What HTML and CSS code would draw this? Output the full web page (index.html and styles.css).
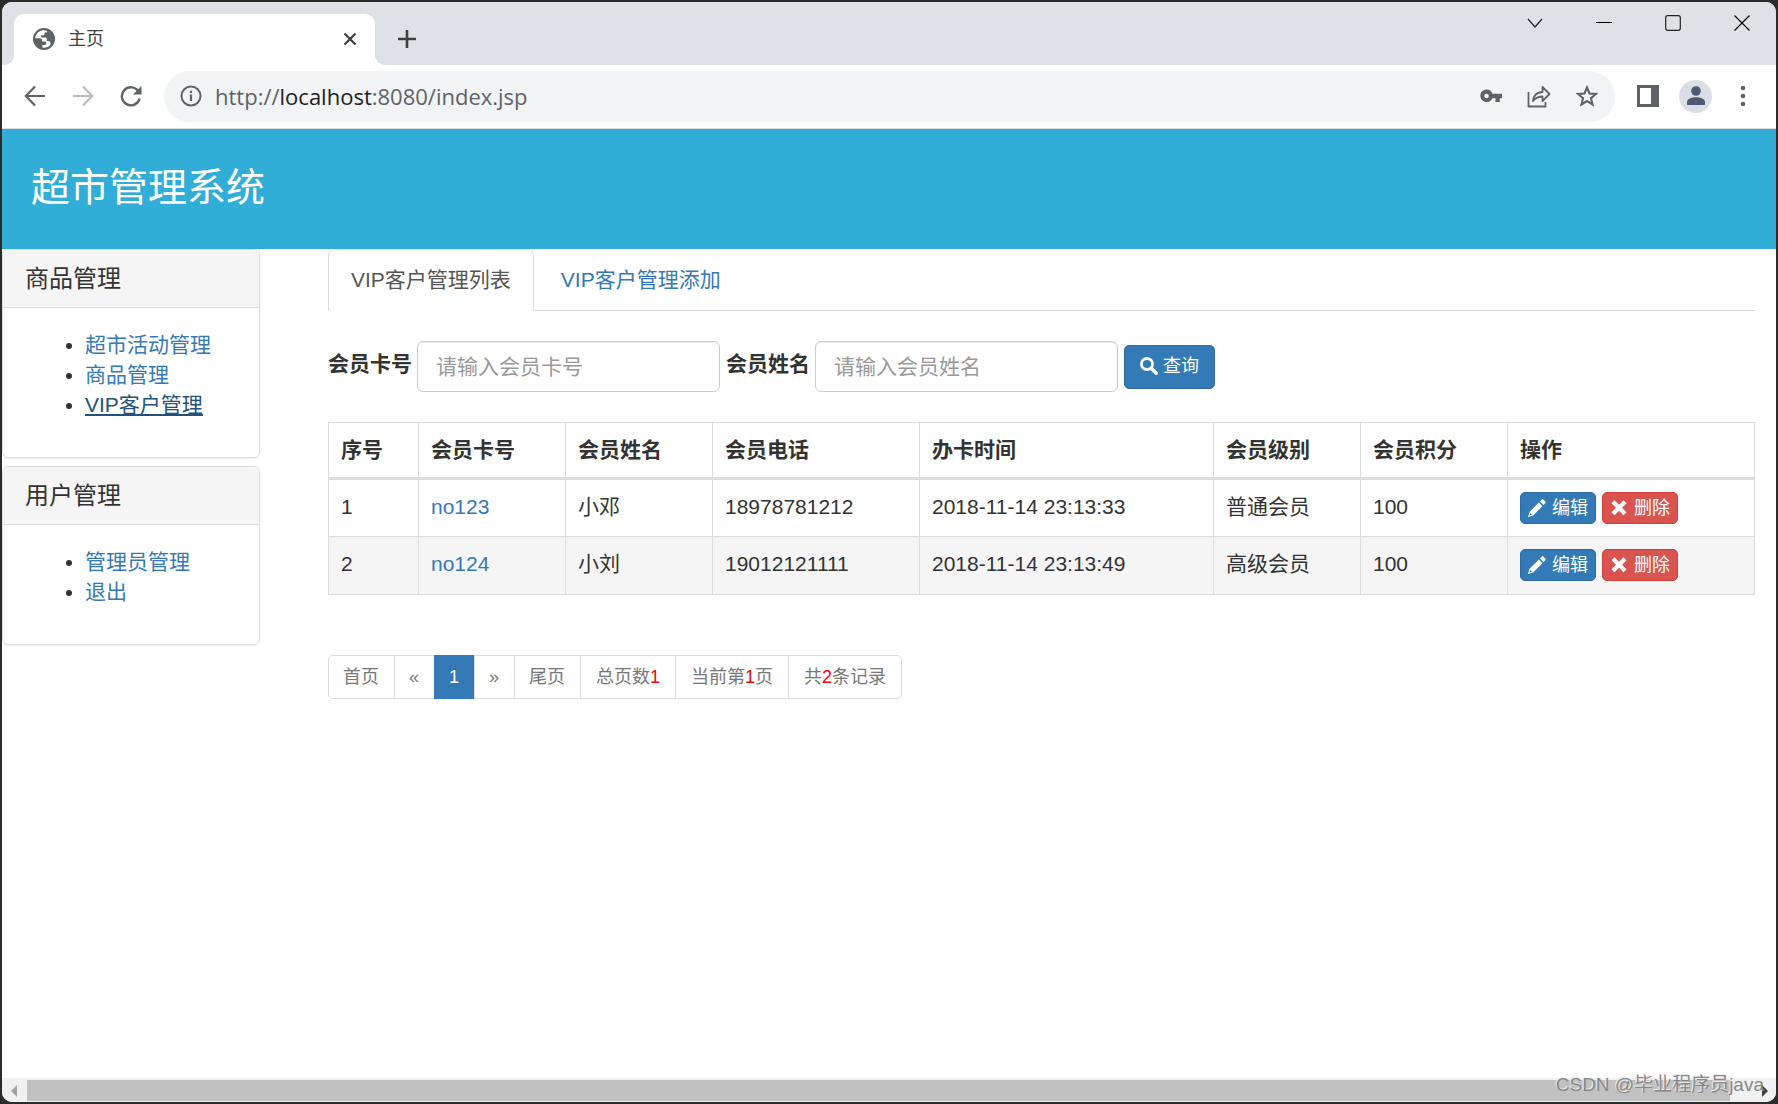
FILE: index.html
```html
<!DOCTYPE html>
<html lang="zh-CN">
<head>
<meta charset="utf-8">
<title>主页</title>
<link rel="stylesheet" href="styles.css">
</head>
<body>
<svg width="0" height="0" class="symbols" aria-hidden="true">
  <symbol id="pencil" viewBox="0 0 18 18"><path fill="currentColor" d="M0 18l1.600-5.200L10.800 3.600l3.600 3.600L5.200 16.400zM2.300 14l-.8 2.500 2.500-.8zM11.900 2.500L13.700.7c.5-.5 1.200-.5 1.700 0l1.900 1.900c.5.500.5 1.200 0 1.700l-1.800 1.800z" fill-rule="evenodd"/></symbol>
  <symbol id="remove" viewBox="0 0 18 18"><path fill="currentColor" d="M4.500 1.200L9 5.700l4.500-4.500 3 3L12 8.700l4.500 4.500-3 3L9 11.700l-4.500 4.500-3-3L6 8.700 1.500 4.200z"/></symbol>
  <symbol id="search" viewBox="0 0 18 18"><circle cx="7" cy="7" r="5.500" fill="none" stroke="currentColor" stroke-width="2.800"/><path d="M11.500 11.500l4.700 4.700" stroke="currentColor" stroke-width="3.600" stroke-linecap="round"/></symbol>
</svg>
<div class="window">
  <div class="tabstrip">
    <div class="browser-tab">
      <svg width="22" height="22" viewBox="0 0 22 22"><circle cx="11" cy="11" r="11" fill="#5f6368"/><path fill="#fff" d="M9.500 2.300C5.500 3 2.500 6.400 2.200 10.300h4.600c1.500 0 2.400 1 2.400 2.200v1h2.300c1 0 1.700.7 1.700 1.700 0 1-.7 1.800-1.700 1.800H9.400v2.600c.5.100 1 .2 1.600.2 2.500 0 4.800-1 6.400-2.700v-2c0-1.200-.8-2-2-2h-1.600v-2.200c0-.8-.6-1.300-1.300-1.300H8.200V7.200h1.900c.9 0 1.500-.6 1.500-1.500V4.500h1.300c.8 0 1.300-.6 1.300-1.300v-.3c-1.500-.6-3.100-.8-4.700-.6z"/></svg>
      <span class="browser-tab-title">主页</span>
      <button class="chrome-button" aria-label="关闭标签页"><svg width="14" height="14" viewBox="0 0 14 14"><path d="M1.500 1.500l11 11M12.500 1.500l-11 11" stroke="#3c4043" stroke-width="2.200"/></svg></button>
    </div>
    <button class="chrome-button new-tab" aria-label="新标签页"><svg width="18" height="18" viewBox="0 0 18 18"><path d="M9 0v18M0 9h18" stroke="#3c4043" stroke-width="2.600"/></svg></button>
    <div class="window-controls">
      <button class="chrome-button" aria-label="搜索标签页"><svg width="16" height="16" viewBox="0 0 16 16"><path d="M1 4l7 8 7-8" fill="none" stroke="#222" stroke-width="1.200"/></svg></button>
      <button class="chrome-button" aria-label="最小化"><svg width="16" height="16" viewBox="0 0 16 16"><path d="M0 7.500h16" stroke="#000"/></svg></button>
      <button class="chrome-button" aria-label="最大化"><svg width="16" height="16" viewBox="0 0 16 16"><rect x=".7" y=".7" width="14.600" height="14.600" rx="2" fill="none" stroke="#222" stroke-width="1.200"/></svg></button>
      <button class="chrome-button" aria-label="关闭"><svg width="16" height="16" viewBox="0 0 16 16"><path d="M.5.500l15 15M15.500.500l-15 15" stroke="#000" stroke-width="1.200"/></svg></button>
    </div>
  </div>
  <div class="toolbar">
    <div class="nav-buttons">
      <button class="chrome-button" aria-label="后退"><svg width="22" height="22" viewBox="0 0 22 22"><path d="M21 11H2M11 1.500L1.800 11l9.200 9.500" fill="none" stroke="#5f6368" stroke-width="2.200"/></svg></button>
      <button class="chrome-button" aria-label="前进"><svg width="22" height="22" viewBox="0 0 22 22"><path d="M1 11h19M11 1.500l9.200 9.500-9.200 9.500" fill="none" stroke="#b9bbbe" stroke-width="2.200"/></svg></button>
      <button class="chrome-button" aria-label="刷新"><svg width="22" height="22" viewBox="0 0 22 22"><path d="M18.500 6.500A9 9 0 1 0 19.600 13.500" fill="none" stroke="#5f6368" stroke-width="2.400"/><path d="M21.500 1v8.500H13z" fill="#5f6368"/></svg></button>
    </div>
    <div class="address">
      <svg width="22" height="22" viewBox="0 0 22 22"><circle cx="11" cy="11" r="9.500" fill="none" stroke="#5f6368" stroke-width="2"/><path d="M11 9.500V16M11 5.700v2.300" stroke="#5f6368" stroke-width="2.200"/></svg>
      <span class="url">http://<b>localhost</b>:8080/index.jsp</span>
      <button class="chrome-button" aria-label="密码"><svg width="22" height="22" viewBox="0 0 22 22"><path fill="#5f6368" fill-rule="evenodd" d="M6.500 4.500a6.300 6.300 0 0 1 5.900 4.300H22v4.400h-2.200V17h-4.300v-3.800h-3.100A6.300 6.300 0 1 1 6.500 4.500zm0 4.200a2.300 2.300 0 1 0 0 4.600 2.300 2.300 0 0 0 0-4.600z"/></svg></button>
      <button class="chrome-button" aria-label="分享"><svg width="24" height="24" viewBox="0 0 24 24"><path d="M1.500 8v14.500h17V18M6 17c.5-5.500 3.500-8.700 9.500-9V3l7 7-7 7v-4.500C11 12.500 8.500 14 6 17z" fill="none" stroke="#5f6368" stroke-width="1.800" stroke-linejoin="round"/></svg></button>
      <button class="chrome-button" aria-label="收藏"><svg width="22" height="22" viewBox="0 0 22 22"><path d="M11 2.500l2.500 6 6.400.5-4.900 4.200 1.500 6.300L11 16.100l-5.500 3.400L7 13.200 2.100 9l6.400-.5z" fill="none" stroke="#5f6368" stroke-width="2.100"/></svg></button>
    </div>
    <div class="toolbar-end">
      <button class="chrome-button" aria-label="侧边栏"><svg width="22" height="22" viewBox="0 0 22 22"><path fill="#5f6368" fill-rule="evenodd" d="M0 0h22v22H0zM3 3v16h11V3z"/></svg></button>
      <button class="chrome-button avatar" aria-label="个人资料"><svg width="20" height="20" viewBox="0 0 20 20"><circle cx="10" cy="5" r="4.800" fill="#4f5b73"/><path d="M1 19v-3c0-3.500 5.500-4.800 9-4.800s9 1.300 9 4.800v3z" fill="#4f5b73"/></svg></button>
      <button class="chrome-button" aria-label="菜单"><svg width="22" height="22" viewBox="0 0 22 22"><g fill="#5f6368"><circle cx="11" cy="3" r="2.300"/><circle cx="11" cy="11" r="2.300"/><circle cx="11" cy="19" r="2.300"/></g></svg></button>
    </div>
  </div>
  <header class="banner"><h1>超市管理系统</h1></header>
  <div class="page">
    <nav class="sidebar">
      <section class="panel">
        <h2>商品管理</h2>
        <ul>
          <li><a href="#">超市活动管理</a></li>
          <li><a href="#">商品管理</a></li>
          <li><a href="#" class="current">VIP客户管理</a></li>
        </ul>
      </section>
      <section class="panel">
        <h2>用户管理</h2>
        <ul>
          <li><a href="#">管理员管理</a></li>
          <li><a href="#">退出</a></li>
        </ul>
      </section>
    </nav>
    <main class="content">
      <div class="tabs">
        <a href="#" class="active">VIP客户管理列表</a>
        <a href="#">VIP客户管理添加</a>
      </div>
      <form class="search-form">
        <label for="card">会员卡号</label>
        <input id="card" type="text" placeholder="请输入会员卡号">
        <label for="name">会员姓名</label>
        <input id="name" type="text" placeholder="请输入会员姓名">
        <button type="button" class="btn btn-primary"><svg width="18" height="18"><use href="#search"/></svg>查询</button>
      </form>
      <table>
        <colgroup><col class="col-index"><col class="col-mid"><col class="col-mid"><col class="col-phone"><col class="col-time"><col class="col-mid"><col class="col-mid"><col></colgroup>
        <thead>
          <tr><th>序号</th><th>会员卡号</th><th>会员姓名</th><th>会员电话</th><th>办卡时间</th><th>会员级别</th><th>会员积分</th><th>操作</th></tr>
        </thead>
        <tbody>
          <tr><td>1</td><td><a href="#">no123</a></td><td>小邓</td><td>18978781212</td><td>2018-11-14 23:13:33</td><td>普通会员</td><td>100</td>
            <td><div class="actions"><button class="btn btn-small btn-primary"><svg width="18" height="18"><use href="#pencil"/></svg>编辑</button><button class="btn btn-small btn-danger"><svg width="18" height="18"><use href="#remove"/></svg>删除</button></div></td></tr>
          <tr><td>2</td><td><a href="#">no124</a></td><td>小刘</td><td>19012121111</td><td>2018-11-14 23:13:49</td><td>高级会员</td><td>100</td>
            <td><div class="actions"><button class="btn btn-small btn-primary"><svg width="18" height="18"><use href="#pencil"/></svg>编辑</button><button class="btn btn-small btn-danger"><svg width="18" height="18"><use href="#remove"/></svg>删除</button></div></td></tr>
        </tbody>
      </table>
      <div class="pagination">
        <a href="#">首页</a>
        <a href="#">«</a>
        <a href="#" class="active">1</a>
        <a href="#">»</a>
        <a href="#">尾页</a>
        <span>总页数<em>1</em></span>
        <span>当前第<em>1</em>页</span>
        <span>共<em>2</em>条记录</span>
      </div>
    </main>
  </div>
  <div class="scrollbar">
    <svg width="25" height="22" viewBox="0 0 25 22"><path d="M15 5v12l-6-6z" fill="#a3a3a3"/></svg>
    <div class="scroll-thumb"></div>
    <svg width="46" height="22" viewBox="0 0 46 22"><path d="M32 5v12l6-6z" fill="#404040"/></svg>
  </div>
  <div class="watermark">CSDN @毕业程序员java</div>
</div>
</body>
</html>
```
FILE: styles.css
```css
* { box-sizing: border-box; }

body {
  margin: 0;
  padding: 2px;
  background: #2b2b2b;
  color: #333;
  font: 21px/30px "Liberation Sans", "Noto Sans CJK SC", sans-serif;
}

a { color: #337ab7; text-decoration: none; }
svg { display: block; flex: none; }
.symbols { position: absolute; }

.window {
  position: relative;
  display: flex;
  flex-direction: column;
  min-height: calc(100vh - 4px);
  overflow: hidden;
  border-radius: 10px;
  background: #fff;
}

/* Browser frame */
.chrome-button {
  display: flex;
  align-items: center;
  justify-content: center;
  padding: 0;
  border: 0;
  background: none;
}

.tabstrip {
  display: flex;
  height: 63px;
  padding: 12px 26px 0 12px;
  background: #dee1e6;
}

.browser-tab {
  position: relative;
  display: flex;
  align-items: center;
  width: 361px;
  padding: 0 18px 1px 19px;
  border-radius: 10px 10px 0 0;
  background: #fff;
}

.browser-tab::before,
.browser-tab::after {
  content: "";
  position: absolute;
  bottom: 0;
  width: 10px;
  height: 10px;
}

.browser-tab::before {
  left: -10px;
  background: radial-gradient(circle at 0 0, transparent 10px, #fff 10px);
}

.browser-tab::after {
  right: -10px;
  background: radial-gradient(circle at 100% 0, transparent 10px, #fff 10px);
}

.browser-tab-title {
  flex: 1;
  margin-left: 13px;
  color: #3c4043;
  font-size: 18px;
}

.new-tab { margin-left: 23px; padding-bottom: 1px; }

.window-controls {
  display: flex;
  gap: 53px;
  height: 18px;
  margin-left: auto;
}

.toolbar {
  display: flex;
  align-items: center;
  height: 64px;
  padding: 0 22px 1px;
  border-bottom: 1px solid #dadce0;
}

.nav-buttons { display: flex; gap: 26px; }

.address {
  display: flex;
  flex: 1;
  align-items: center;
  gap: 25px;
  height: 51px;
  margin-left: 22px;
  padding: 0 17px 0 16px;
  border-radius: 26px;
  background: #f1f3f4;
}

.url {
  flex: 1;
  margin-left: -12px;
  color: #5f6368;
  font: 22px/30px "Open Sans", "Noto Sans", sans-serif;
}

.url b { color: #202124; font-weight: 400; }

.toolbar-end {
  display: flex;
  align-items: center;
  gap: 20px;
  margin-left: 22px;
}

.avatar {
  width: 33px;
  height: 33px;
  border-radius: 50%;
  background: #dadfe6;
}

/* Page */
.banner {
  height: 120px;
  padding: 37px 29px;
  background: #31aed7;
  color: #fff;
}

.banner h1 {
  margin: 0;
  font-size: 39px;
  font-weight: 400;
  line-height: 44px;
}

.page {
  display: flex;
  flex: 1;
  gap: 68px;
  padding-right: 21px;
}

.sidebar { flex: 0 0 258px; }

.panel {
  margin-bottom: 8px;
  border: 1px solid #ddd;
  border-radius: 6px;
  box-shadow: 0 1px 2px rgba(0, 0, 0, .08);
}

.panel h2 {
  margin: 0;
  padding: 14px 22px 13px;
  border-bottom: 1px solid #ddd;
  border-radius: 5px 5px 0 0;
  background: #f5f5f5;
  font-size: 24px;
  font-weight: 400;
  line-height: 30px;
}

.panel ul {
  margin: 0;
  padding: 22px 22px 37px 82px;
}

.panel .current { color: #23527c; text-decoration: underline; }

.content { flex: 1; min-width: 0; }

.tabs {
  display: flex;
  gap: 4px;
  border-bottom: 1px solid #ddd;
}

.tabs a {
  margin-bottom: -1px;
  padding: 15px 22px;
  border: 1px solid transparent;
  border-radius: 6px 6px 0 0;
}

.tabs .active {
  border-color: #ddd #ddd #fff;
  background: #fff;
  color: #555;
}

.search-form {
  display: flex;
  align-items: center;
  gap: 6px;
  margin: 30px 0;
}

.search-form label { margin-right: -1px; padding-bottom: 5px; font-weight: 700; }

.search-form input {
  width: 303px;
  height: 51px;
  padding: 8px 18px;
  border: 1px solid #ccc;
  border-radius: 6px;
  box-shadow: inset 0 1px 1px rgba(0, 0, 0, .08);
  font: inherit;
}

.search-form input::placeholder { color: #999; opacity: 1; }

.btn {
  display: flex;
  align-items: center;
  gap: 5px;
  height: 44px;
  padding: 0 15px 2px;
  border: 1px solid;
  border-radius: 5px;
  color: #fff;
  font: inherit;
  font-size: 18px;
}

.btn-small { gap: 6px; height: 32px; padding: 0 7px 1px; }
.btn-primary { border-color: #2e6da4; background: #337ab7; }
.btn-danger { border-color: #d43f3a; background: #d9534f; }
.actions { display: flex; gap: 6px; }

table {
  width: 100%;
  border-collapse: collapse;
  table-layout: fixed;
}

.col-index { width: 90px; }
.col-mid { width: 147px; }
.col-phone { width: 207px; }
.col-time { width: 294px; }

th, td {
  padding: 12px;
  border: 1px solid #ddd;
  text-align: left;
  vertical-align: top;
}

th { border-bottom-width: 3px; }
tbody tr { height: 58px; }
tbody tr:nth-child(even) { background: #f5f5f5; }

.pagination {
  display: flex;
  margin-top: 60px;
  font-size: 18px;
}

.pagination > * {
  margin-left: -1px;
  padding: 6px 15px;
  border: 1px solid #ddd;
  color: #777;
}

.pagination > a { padding-left: 14px; }
.pagination > :first-child { margin-left: 0; border-radius: 5px 0 0 5px; }
.pagination > :last-child { border-radius: 0 5px 5px 0; }

.pagination .active {
  border-color: #337ab7;
  background: #337ab7;
  color: #fff;
}

.pagination em { color: #f00; font-style: normal; }

.scrollbar {
  display: flex;
  height: 24px;
  padding: 2px 0 1px;
  background: #f1f1f1;
}

.scroll-thumb { flex: 1; background: #c1c1c1; }

.watermark {
  position: absolute;
  right: 12px;
  bottom: 2px;
  color: #888;
  font-size: 19px;
  text-shadow: -1px -1px 0 #eee;
}
```
